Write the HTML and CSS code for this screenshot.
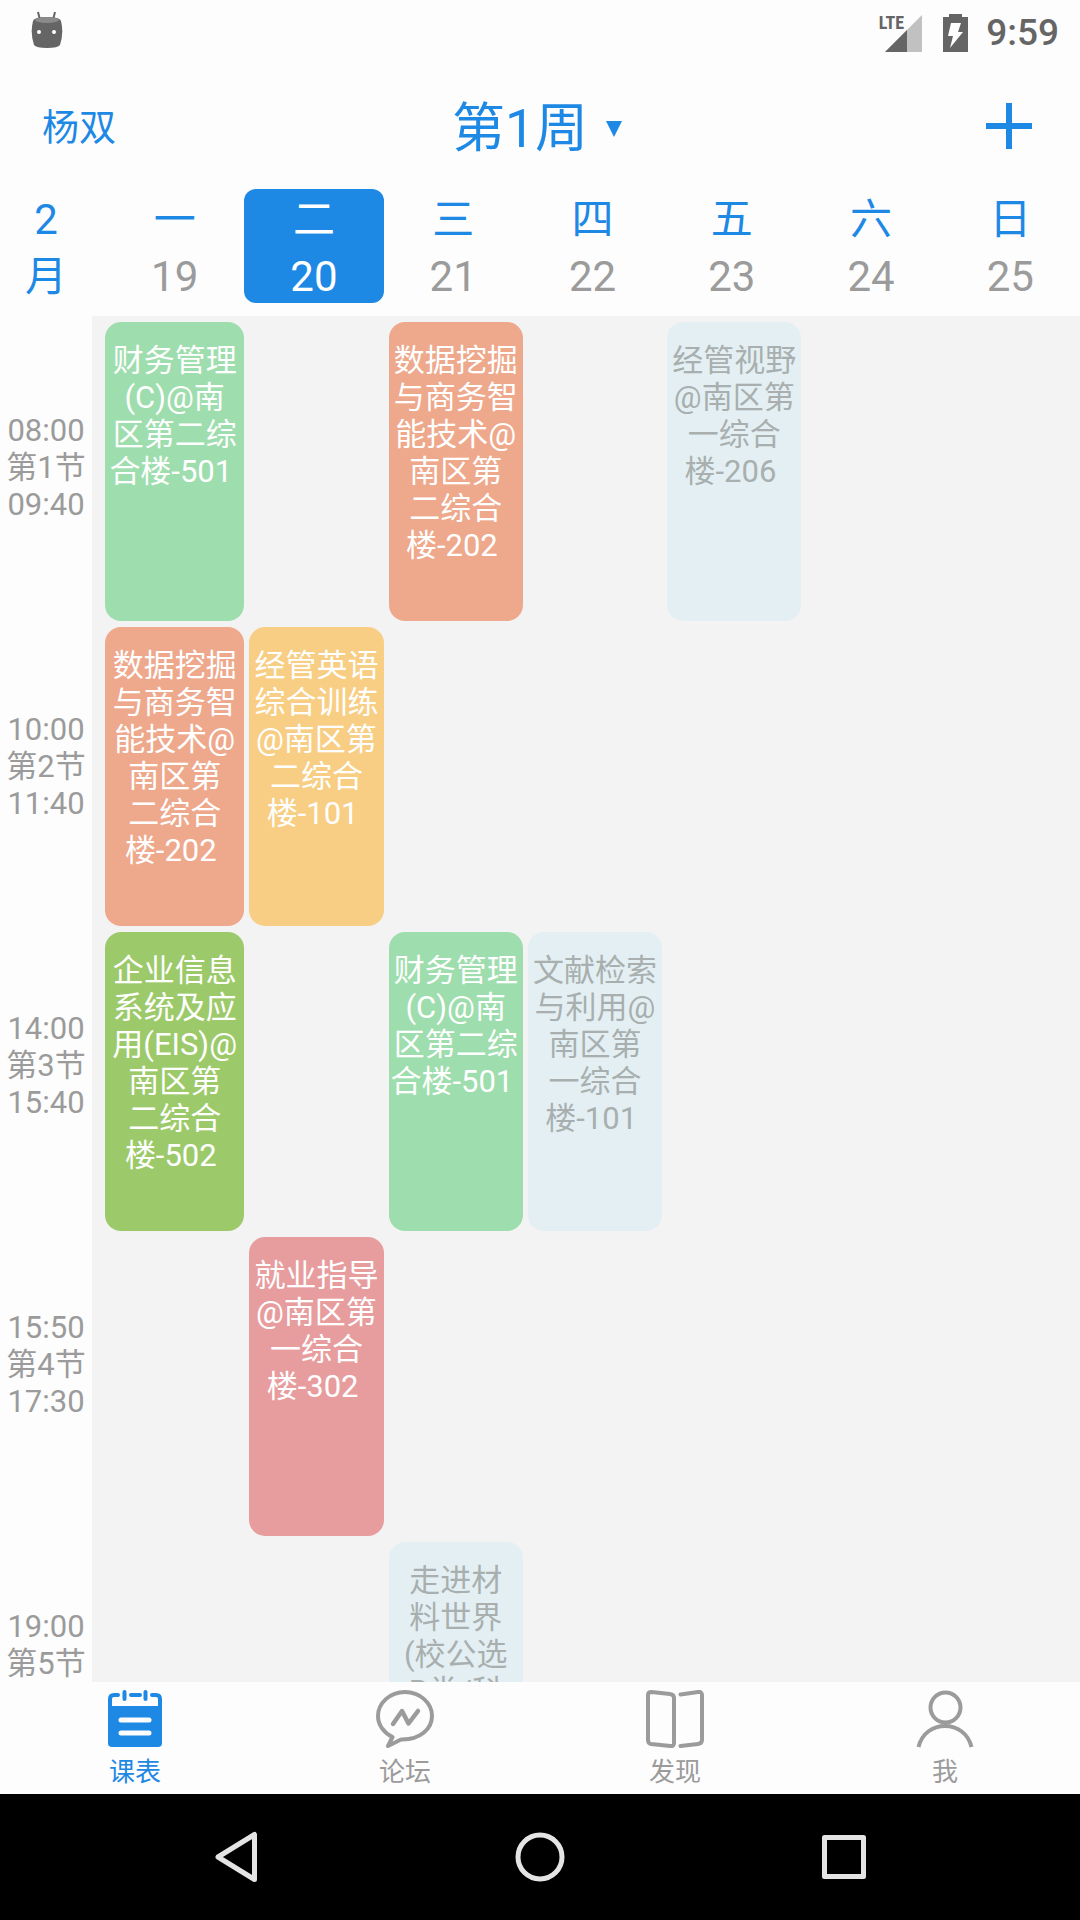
FILE: index.html
```html
<!DOCTYPE html>
<html lang="zh-CN">
<head>
<meta charset="utf-8">
<meta name="viewport" content="width=device-width, initial-scale=1">
<title>课表</title>
<link rel="stylesheet" href="styles.css">
</head>
<body>
<div class="status">
  <svg class="status-droid" viewBox="0 0 32 38" aria-hidden="true">
    <path d="M7 1l2 8M24 1l-2 8" stroke="#656565" stroke-width="2" fill="none"/>
    <path d="M2 10Q3 6 16 6T30 10Q33 22 29 34Q27 37 16 37T3 34Q-1 22 2 10z" fill="#656565"/>
    <ellipse cx="16" cy="9" rx="12" ry="3" fill="#8b8b8b"/>
    <circle cx="8" cy="21" r="2" fill="#fff"/><circle cx="23" cy="21" r="2" fill="#fff"/>
  </svg>
  <div class="status-right">
    <div class="signal">
      <svg viewBox="0 0 37 37" aria-hidden="true"><path d="M37 0V37H0z" fill="#c1c1c1"/><path d="M22 15V37H0z" fill="#656565"/></svg>
      <span class="signal-label">LTE</span>
    </div>
    <svg class="battery" viewBox="0 0 25 38" aria-hidden="true"><path d="M6 0H19V3H25V38H0V3H6z" fill="#656565"/><path d="M8 9H18L15 18H20L7 34L10 22H5z" fill="#fff"/></svg>
    <span class="clock">9:59</span>
  </div>
</div>
<header class="titlebar">
  <button class="user" type="button">杨双</button>
  <button class="week" type="button">第1周<svg viewBox="0 0 16 16" aria-hidden="true"><path d="M0 0H16L8 16z" fill="currentColor"/></svg></button>
  <button class="add" type="button" aria-label="添加"><svg viewBox="0 0 46 46" aria-hidden="true"><path d="M23 0V46M0 23H46" stroke="currentColor" stroke-width="6"/></svg></button>
</header>
<div class="days">
  <div class="month">2<br>月</div>
  <ol class="day-list">
    <li>一<span>19</span></li>
    <li class="today">二<span>20</span></li>
    <li>三<span>21</span></li>
    <li>四<span>22</span></li>
    <li>五<span>23</span></li>
    <li>六<span>24</span></li>
    <li>日<span>25</span></li>
  </ol>
</div>
<main class="schedule">
  <ol class="times">
    <li>08:00<br>第1节<br>09:40</li>
    <li>10:00<br>第2节<br>11:40</li>
    <li>14:00<br>第3节<br>15:40</li>
    <li>15:50<br>第4节<br>17:30</li>
    <li>19:00<br>第5节<br>&nbsp;</li>
  </ol>
  <div class="grid">
    <div class="card mon row1 green">财务管理<br>(C)@南<br>区第二综<br>合楼-501&nbsp;</div>
    <div class="card wed row1 orange">数据挖掘<br>与商务智<br>能技术@<br>南区第<br>二综合<br>楼-202&nbsp;</div>
    <div class="card fri row1 idle">经管视野<br>@南区第<br>一综合<br>楼-206&nbsp;</div>
    <div class="card mon row2 orange">数据挖掘<br>与商务智<br>能技术@<br>南区第<br>二综合<br>楼-202&nbsp;</div>
    <div class="card tue row2 yellow">经管英语<br>综合训练<br>@南区第<br>二综合<br>楼-101&nbsp;</div>
    <div class="card mon row3 lime">企业信息<br>系统及应<br>用(EIS)@<br>南区第<br>二综合<br>楼-502&nbsp;</div>
    <div class="card wed row3 green">财务管理<br>(C)@南<br>区第二综<br>合楼-501&nbsp;</div>
    <div class="card thu row3 idle">文献检索<br>与利用@<br>南区第<br>一综合<br>楼-101&nbsp;</div>
    <div class="card tue row4 pink">就业指导<br>@南区第<br>一综合<br>楼-302&nbsp;</div>
    <div class="card wed row5 idle">走进材<br>料世界<br>(校公选<br>B类/科</div>
  </div>
</main>
<nav class="tabs">
  <a class="active" href="#schedule">
    <svg viewBox="0 0 58 58" aria-hidden="true"><path d="M2 16H56V53Q56 57 52 57H6Q2 57 2 53z" fill="currentColor"/><path d="M4 20V9Q4 5 8 5H12M25 5H34M46 5H50Q54 5 54 9V20M18.500 2V9M39.500 2V9" fill="none" stroke="currentColor" stroke-width="4" stroke-linecap="round"/><path d="M15 30H43M15 43H43" stroke="#fdfdfd" stroke-width="5" stroke-linecap="round"/></svg>
    课表</a>
  <a href="#forum">
    <svg viewBox="0 0 58 58" aria-hidden="true"><g fill="none" stroke="currentColor" stroke-width="4" stroke-linecap="round" stroke-linejoin="round"><path d="M16.500 47C8 43 2 35 2 26C2 13 14 2 29 2S56 13 56 26S44 50 25 49.500L12 56z"/><path stroke-width="4.500" d="M17 34L26 21L32.500 33.500L42 21"/></g></svg>
    论坛</a>
  <a href="#discover">
    <svg viewBox="0 0 58 58" aria-hidden="true"><path d="M5.500 2L24 4Q28 4.500 28 8V53Q28 56.500 24.500 56L5 54Q2 53.500 2 50V5Q2 2 5.500 2zM34.500 4.500L52 2Q56 1.500 56 5V50Q56 53.500 52 54L34.500 56" fill="none" stroke="currentColor" stroke-width="4" stroke-linecap="round"/></svg>
    发现</a>
  <a href="#me">
    <svg viewBox="0 0 58 58" aria-hidden="true"><g fill="none" stroke="currentColor" stroke-width="4"><circle cx="29.500" cy="17.500" r="15"/><path d="M2.500 57C6 43 17 36 29 36S52 43 55.500 57"/></g></svg>
    我</a>
</nav>
<div class="sysnav">
  <button type="button" aria-label="返回"><svg viewBox="0 0 52 52" aria-hidden="true"><path d="M44.500 3.500V48.500L8 26z"/></svg></button>
  <button type="button" aria-label="主页"><svg viewBox="0 0 52 52" aria-hidden="true"><circle cx="26" cy="26" r="22"/></svg></button>
  <button type="button" aria-label="最近任务"><svg viewBox="0 0 52 52" aria-hidden="true"><rect x="6.500" y="6.500" width="39" height="39"/></svg></button>
</div>
</body>
</html>
```
FILE: styles.css
```css
* { box-sizing: border-box; }

body {
  margin: 0;
  height: 100vh;
  display: flex;
  flex-direction: column;
  background: #fdfdfd;
  color: #9b9b9b;
  font-family: Roboto, "Noto Sans CJK SC", sans-serif;
  font-size: 31px;
  line-height: 37px;
}

button {
  border: 0;
  padding: 0;
  background: none;
  color: inherit;
  font: inherit;
}

ol { list-style: none; margin: 0; padding: 0; }
svg { display: block; }

.status {
  flex: none;
  height: 63px;
  padding: 11px 21px 0 31px;
  display: flex;
  justify-content: space-between;
  align-items: flex-start;
  color: #656565;
}
.status-droid { width: 32px; height: 38px; }
.status-right { display: flex; align-items: center; }
.signal { position: relative; margin-right: 21px; }
.signal svg { width: 37px; height: 37px; }
.signal-label {
  position: absolute;
  right: 18px;
  top: 0;
  font: bold 18px/16px "Roboto Condensed", "Liberation Sans Narrow", Roboto, sans-serif;
}
.battery { width: 25px; height: 38px; margin-right: 18px; }
.clock { font-size: 37px; font-weight: 500; line-height: 44px; }

.titlebar {
  flex: none;
  height: 126px;
  padding: 0 48px 0 42px;
  display: grid;
  grid-template-columns: 1fr auto 1fr;
  align-items: center;
  color: #1e88e5;
}
.user, .week { padding-top: 5px; }
.user { justify-self: start; font-size: 37px; }
.week { display: flex; align-items: center; gap: 18px; font-size: 53px; line-height: 60px; }
.week svg { width: 16px; height: 16px; }
.add { justify-self: end; }
.add svg { width: 46px; height: 46px; }

.days {
  flex: none;
  display: flex;
  gap: 13px;
  padding-bottom: 13px;
  font-size: 42px;
  line-height: 57px;
  text-align: center;
  color: #1e88e5;
}
.month { width: 92px; }
.day-list { flex: 1; display: grid; grid-template-columns: repeat(7, 1fr); }
.month, .day-list li { height: 114px; padding-top: 2px; }
.day-list span { display: block; color: #9b9b9b; }
.today { border-radius: 12px; background: #1e88e5; color: #fff; }
.day-list .today span { color: #fff; }

.schedule {
  flex: 1;
  min-height: 0;
  display: flex;
  overflow: hidden;
}
.times { width: 92px; text-align: center; }
.times li {
  height: 299px;
  padding-top: 4px;
  display: flex;
  align-items: center;
  justify-content: center;
}
.grid {
  flex: 1;
  display: grid;
  grid-template-columns: repeat(7, 1fr);
  grid-template-rows: repeat(5, 299px);
  row-gap: 6px;
  padding: 6px 0 0 13px;
  background: #f3f3f3;
}
.card {
  margin-left: 5px;
  padding-top: 20px;
  border-radius: 16px;
  color: #fff;
  text-align: center;
  white-space: nowrap;
}
.mon { grid-column: 1; margin-left: 0; }
.tue { grid-column: 2; }
.wed { grid-column: 3; }
.thu { grid-column: 4; }
.fri { grid-column: 5; }
.row1 { grid-row: 1; }
.row2 { grid-row: 2; }
.row3 { grid-row: 3; }
.row4 { grid-row: 4; }
.row5 { grid-row: 5; }
.green { background: #9eddad; }
.orange { background: #eea88c; }
.yellow { background: #f8ce84; }
.lime { background: #9cca6a; }
.pink { background: #e79d9e; }
.idle { background: #e4eff4; color: #a8afae; }

.tabs {
  flex: none;
  height: 112px;
  display: grid;
  grid-template-columns: repeat(4, 1fr);
  font-size: 26px;
  line-height: 36px;
}
.tabs a {
  display: flex;
  flex-direction: column;
  align-items: center;
  gap: 6px;
  padding-top: 8px;
  color: #9b9b9b;
  text-decoration: none;
}
.tabs .active { color: #1e88e5; }
.tabs svg { width: 58px; height: 58px; }

.sysnav {
  flex: none;
  height: 126px;
  padding: 0 84px;
  display: grid;
  grid-template-columns: repeat(3, 1fr);
  align-items: center;
  justify-items: center;
  background: #000;
}
.sysnav svg {
  width: 52px;
  height: 52px;
  fill: none;
  stroke: #e4e4e4;
  stroke-width: 5px;
  stroke-linejoin: round;
}
```
